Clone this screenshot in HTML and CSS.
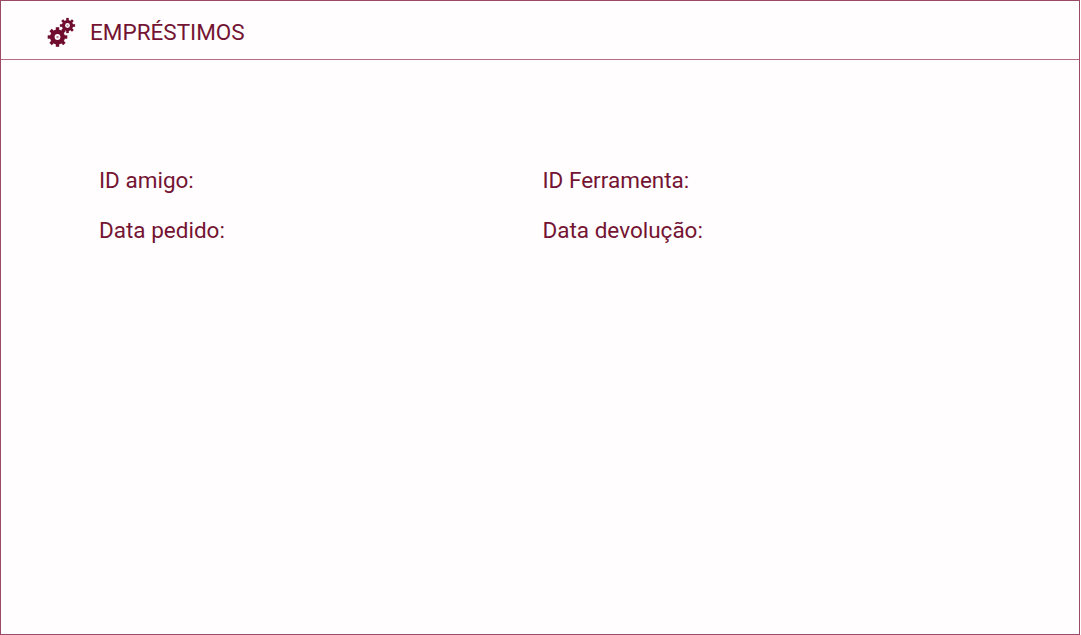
FILE: index.html
```html
<!DOCTYPE html>
<html lang="pt">
<head>
    <meta charset="UTF-8">
    <meta name="viewport" content="width=device-width, initial-scale=1.0">
    <title>Empréstimos</title>
    <link rel="stylesheet" href="styles.css">
</head>
<body>
    <div class="panel">
        <header class="panel-header">
            <svg class="gears" width="30" height="32" viewBox="0 0 30 32" aria-hidden="true">
                <g transform="translate(10.5 20)">
                    <g class="teeth">
                        <rect x="-1.7" y="-9.8" width="3.4" height="19.6" />
                        <rect x="-1.7" y="-9.8" width="3.4" height="19.6" transform="rotate(45)" />
                        <rect x="-1.7" y="-9.8" width="3.4" height="19.6" transform="rotate(90)" />
                        <rect x="-1.7" y="-9.8" width="3.4" height="19.6" transform="rotate(135)" />
                    </g>
                    <circle class="wheel" r="7.5" />
                    <circle class="hole" r="2.9" />
                    <circle class="hub" r="1.2" />
                </g>
                <g transform="translate(20.5 8.5)">
                    <g class="teeth">
                        <rect x="-1.3" y="-7.6" width="2.6" height="15.2" />
                        <rect x="-1.3" y="-7.6" width="2.6" height="15.2" transform="rotate(45)" />
                        <rect x="-1.3" y="-7.6" width="2.6" height="15.2" transform="rotate(90)" />
                        <rect x="-1.3" y="-7.6" width="2.6" height="15.2" transform="rotate(135)" />
                    </g>
                    <circle class="wheel" r="5.6" />
                    <circle class="hole" r="2.4" />
                    <circle class="hub" r="1" />
                </g>
            </svg>
            <h1>EMPRÉSTIMOS</h1>
        </header>
        <main class="details">
            <div class="field">ID amigo:</div>
            <div class="field">ID Ferramenta:</div>
            <div class="field">Data pedido:</div>
            <div class="field">Data devolução:</div>
        </main>
    </div>
</body>
</html>
```

FILE: styles.css
```css
html, body {
    height: 100%;
}
body {
    margin: 0;
    background-color: #fff;
    font-family: Roboto, "Liberation Sans", sans-serif;
    color: #741433;
}
.panel {
    box-sizing: border-box;
    width: 1080px;
    height: 635px;
    background-color: #fffdfd;
    border: 1px solid #9a4a66;
}
.panel-header {
    box-sizing: border-box;
    height: 59px;
    padding: 3px 0 0 46px;
    display: flex;
    align-items: center;
    border-bottom: 1px solid #b56a85;
}
.gears {
    flex: none;
    margin: 2px 13px 0 0;
}
.teeth, .wheel {
    fill: #700c2d;
}
.hole {
    fill: #fffdfd;
}
.hub {
    fill: #b58a99;
}
h1 {
    margin: 0;
    font-size: 22.5px;
    font-weight: 400;
    line-height: 28px;
}
.details {
    padding: 95px 0 0 98px;
    display: grid;
    grid-template-columns: 443.5px 1fr;
    grid-auto-rows: 49.5px;
    font-size: 22.5px;
    line-height: 50px;
}
```
